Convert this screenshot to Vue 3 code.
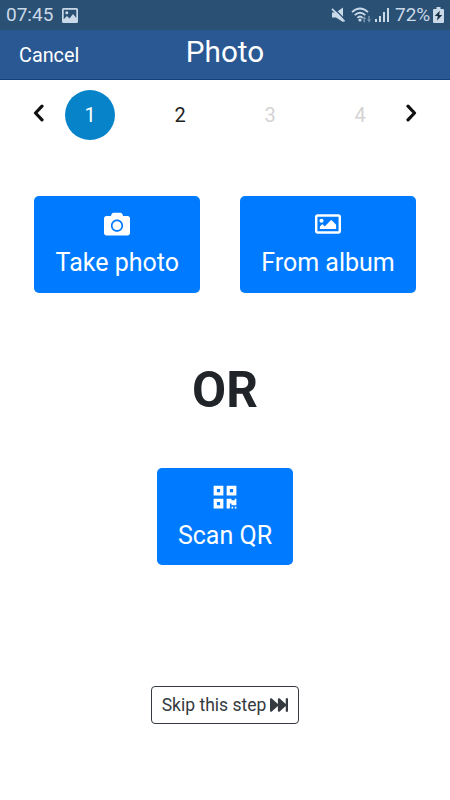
<script setup>
const steps = [
  { n: 1, state: 'active' },
  { n: 2, state: 'ready' },
  { n: 3, state: 'disabled' },
  { n: 4, state: 'disabled' },
]
</script>

<template>
  <div class="screen">
    <div class="status">
      <span class="clock">07:45</span>
      <svg class="s-image" viewBox="0 0 16 15"><path fill-rule="evenodd" d="M1.500 0h13Q16 0 16 1.500v12Q16 15 14.500 15h-13Q0 15 0 13.500v-12Q0 0 1.500 0zM1.700 1.700v9.600l3.300-3.300 2.500 2.500 3.500-4.500 3.300 4V1.700zM4.800 3.200a1.500 1.500 0 1 1 0 3 1.500 1.500 0 0 1 0-3z" /></svg>
      <svg class="s-mute" viewBox="0 0 16 16"><path d="M1 5.500h4L12 0.500V15L5 10.500H1z" /><path class="cut" d="M2 0.500 15 13.500" /><path class="slash" d="M1 1.800 13.500 14.300" /></svg>
      <svg class="s-wifi" viewBox="0 0 21 16"><path class="arc" d="M1 5.200Q9 -2.200 17 5.200M3.700 8.200Q9 3.200 14.300 8.200M6.400 10.800Q9 8.300 11.600 10.800" /><circle cx="9" cy="13" r="1.600" /><path class="dim" d="M11 12l2.200-2.800 2.200 2.800h-1.500v3.500h-1.400v-3.500zM16 12.500h1.300v-3.500h1.400v3.500H20.200L18 15.500z" /></svg>
      <svg class="s-signal" viewBox="0 0 14 14"><path d="M0 11h2v3H0zM4 8h2v6H4zM8 4h2v10H8zM12 0h2v14h-2z" /></svg>
      <span class="percent">72%</span>
      <svg class="s-battery" viewBox="0 0 11 16"><path d="M3.500 0h4v2H10q1 0 1 1v12q0 1-1 1H1q-1 0-1-1V3q0-1 1-1h2.500z" /><path class="bolt" d="M6.800 3.800 1.800 9h3l-.8 4.500L9.200 8h-3z" /></svg>
    </div>

    <header class="header">
      <span class="cancel">Cancel</span>
      <span class="title">Photo</span>
    </header>

    <nav class="stepper">
      <svg class="chevron" viewBox="0 0 12 18"><path d="M9 2.200 2.500 9l6.500 6.800" /></svg>
      <div class="steps">
        <div v-for="s in steps" :key="s.n" class="cell">
          <span class="step" :class="s.state">{{ s.n }}</span>
        </div>
      </div>
      <svg class="chevron" viewBox="0 0 12 18"><path d="M3 2.200 9.500 9l-6.500 6.800" /></svg>
    </nav>

    <main class="content">
      <div class="pair">
        <button class="btn take">
          <svg class="icon" viewBox="0 0 512 512"><path d="M512 144v288c0 26.500-21.500 48-48 48H48c-26.500 0-48-21.500-48-48V144c0-26.500 21.500-48 48-48h88l12.300-32.900c7-18.700 24.900-31.100 44.900-31.100h125.500c20 0 37.900 12.400 44.900 31.100L376 96h88c26.500 0 48 21.500 48 48zM376 288c0-66.200-53.800-120-120-120s-120 53.800-120 120 53.800 120 120 120 120-53.800 120-120zm-32 0c0 48.500-39.500 88-88 88s-88-39.500-88-88 39.500-88 88-88 88 39.500 88 88z" /></svg>
          <span>Take photo</span>
        </button>
        <button class="btn album">
          <svg class="icon" viewBox="0 0 512 512"><path d="M464 64H48C21.490 64 0 85.490 0 112v288c0 26.510 21.490 48 48 48h416c26.510 0 48-21.490 48-48V112c0-26.510-21.490-48-48-48zm-6 336H54a6 6 0 0 1-6-6V118a6 6 0 0 1 6-6h404a6 6 0 0 1 6 6v276a6 6 0 0 1-6 6zM128 152c-22.091 0-40 17.909-40 40s17.909 40 40 40 40-17.909 40-40-17.909-40-40-40zM96 352h320v-80l-87.515-87.515c-4.686-4.686-12.284-4.686-16.971 0L192 304l-39.515-39.515c-4.686-4.686-12.284-4.686-16.971 0L96 304v48z" /></svg>
          <span>From album</span>
        </button>
      </div>
      <h1 class="or">OR</h1>
      <button class="btn scan">
        <svg class="icon" viewBox="-32 0 512 512"><path d="M0 224h192V32H0v192zM64 96h64v64H64V96zm192-64v192h192V32H256zm128 128h-64V96h64v64zM0 480h192V288H0v192zm64-128h64v64H64v-64zm352-64h32v128h-96v-32h-32v96h-64V288h96v32h64v-32zm0 160h32v32h-32v-32zm-64 0h32v32h-32v-32z" /></svg>
        <span>Scan QR</span>
      </button>
      <button class="skip">
        <span>Skip this step</span>
        <svg viewBox="0 0 512 512"><path d="M512 76v360c0 6.600-5.400 12-12 12h-40c-6.600 0-12-5.400-12-12V284.100L276.500 440.600c-20.600 17.200-52.500 2.800-52.500-24.600V284.100L52.500 440.600C31.900 457.800 0 443.400 0 416V96c0-27.400 31.900-41.700 52.500-24.600L224 226.800V96c0-27.400 31.900-41.700 52.500-24.600L448 226.800V76c0-6.600 5.400-12 12-12h40c6.600 0 12 5.400 12 12z" /></svg>
      </button>
    </main>
  </div>
</template>

<style>
body {
  margin: 0;
  background: #fff;
}
</style>

<style scoped>
.screen {
  width: 450px;
  height: 800px;
  overflow: hidden;
  background: #fff;
  color: #212529;
  font-family: Roboto, 'Liberation Sans', sans-serif;
}
.screen svg {
  flex: none;
  display: block;
}
.status {
  display: flex;
  align-items: center;
  height: 30px;
  box-sizing: border-box;
  padding: 0 6px;
  background: #2a5074;
  color: #cad9e8;
  fill: #cad9e8;
  font-size: 19px;
  line-height: 30px;
}
.clock {
  width: 56px;
}
.s-image {
  width: 16px;
  height: 15px;
}
.s-mute {
  width: 16px;
  height: 16px;
  margin-left: 253px;
}
.cut {
  stroke: #2a5074;
  stroke-width: 1.3;
}
.slash {
  stroke: #cad9e8;
  stroke-width: 1.8;
}
.s-wifi {
  width: 21px;
  height: 16px;
  margin-left: 4px;
}
.arc {
  fill: none;
  stroke: #cad9e8;
  stroke-width: 1.8;
}
.dim {
  fill: #7795b0;
}
.s-signal {
  width: 14px;
  height: 14px;
  margin-left: 3px;
}
.percent {
  width: 38px;
  margin-left: 6px;
}
.s-battery {
  width: 11px;
  height: 16px;
}
.bolt {
  fill: #172c40;
}
.header {
  display: grid;
  grid-template-columns: 1fr auto 1fr;
  height: 50px;
  box-sizing: border-box;
  padding: 0 19px;
  background: #295893;
  border-bottom: 1px solid #164178;
  color: #fff;
}
.cancel {
  font-size: 19.8px;
  line-height: 51px;
}
.title {
  font-size: 29.7px;
  line-height: 44px;
}
.stepper {
  display: flex;
  align-items: center;
  height: 70px;
  padding: 0 33px;
}
.chevron {
  width: 12px;
  height: 18px;
  margin-top: -4px;
  fill: none;
  stroke: #111;
  stroke-width: 3.2;
  stroke-linecap: round;
  stroke-linejoin: round;
}
.steps {
  display: flex;
  flex: none;
  width: 360px;
}
.cell {
  display: flex;
  justify-content: center;
  width: 90px;
}
.step {
  width: 50px;
  height: 50px;
  border-radius: 50%;
  font-size: 20px;
  line-height: 51px;
  text-align: center;
}
.active {
  background: #0783c9;
  color: #fff;
}
.ready {
  color: #222;
}
.disabled {
  color: #d3d3d3;
}
.content {
  display: flex;
  flex-direction: column;
  align-items: center;
  padding-top: 45.700px;
}
.pair {
  display: flex;
  gap: 40px;
}
button {
  font-family: inherit;
  margin: 0;
  padding: 0;
}
.btn {
  display: flex;
  flex-direction: column;
  align-items: center;
  box-sizing: border-box;
  height: 97.500px;
  padding-top: 15.300px;
  border: 0;
  border-radius: 5px;
  background: #007bff;
  color: #fff;
  font-size: 25px;
  line-height: 38px;
}
.icon {
  width: 26px;
  height: 26px;
  margin: 0 0 7px;
  fill: #fff;
}
.take {
  width: 166px;
}
.album {
  width: 175.500px;
}
.scan {
  width: 136px;
  padding-top: 16.200px;
}
.or {
  margin: 67.200px 0 47.600px;
  font-size: 49.5px;
  line-height: 60px;
  font-weight: 700;
}
.skip {
  display: flex;
  align-items: center;
  justify-content: center;
  gap: 4px;
  width: 148.500px;
  height: 38.500px;
  margin-top: 120.300px;
  box-sizing: border-box;
  border: 1px solid #343a40;
  border-radius: 4px;
  background: #fff;
  color: #343a40;
  font-size: 17.5px;
  line-height: 26px;
}
.skip svg {
  width: 18px;
  height: 18px;
  fill: #343a40;
}
</style>
